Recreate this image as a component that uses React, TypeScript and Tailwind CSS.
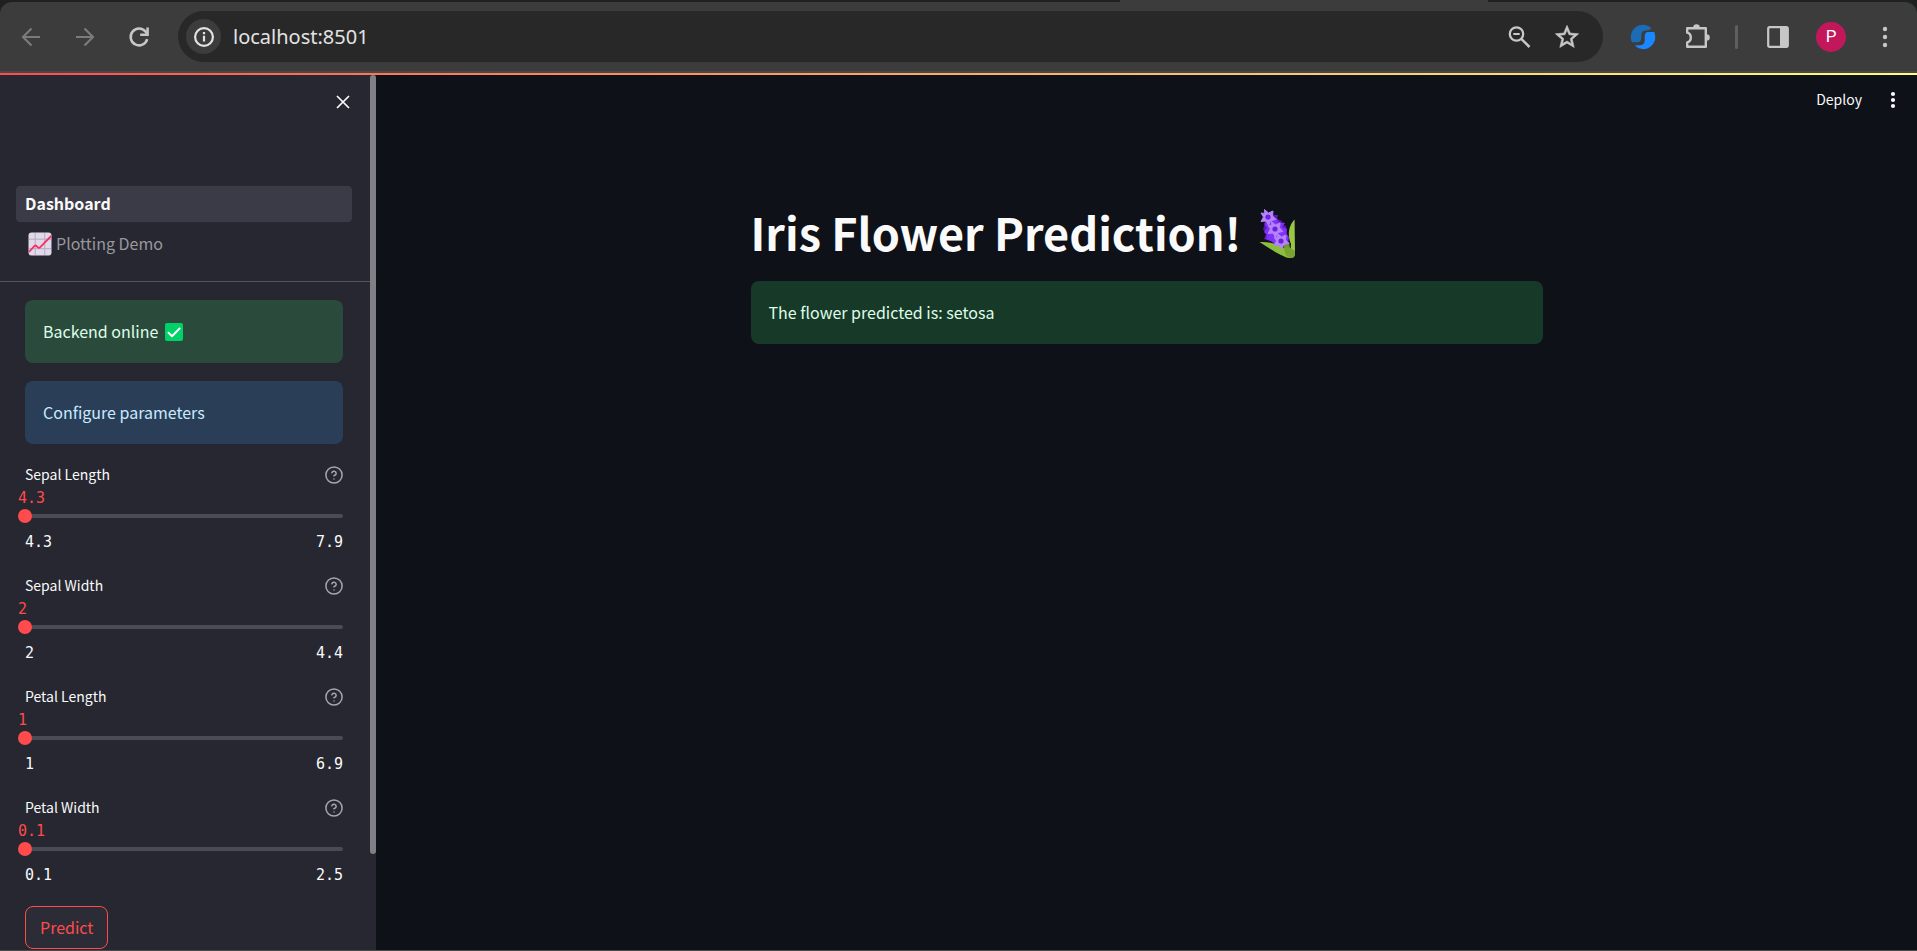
import { useState } from "react";

const sans = "font-['Noto_Sans_CJK_JP','Noto_Sans',sans-serif]";
const mono = "font-['DejaVu_Sans_Mono','Liberation_Mono',monospace]";

type Parameter = { id: string; label: string; min: number; max: number };

const parameters: Parameter[] = [
  { id: "sepal-length", label: "Sepal Length", min: 4.3, max: 7.9 },
  { id: "sepal-width", label: "Sepal Width", min: 2, max: 4.4 },
  { id: "petal-length", label: "Petal Length", min: 1, max: 6.9 },
  { id: "petal-width", label: "Petal Width", min: 0.1, max: 2.5 },
];

function BackIcon() {
  return (
    <svg width="24" height="24" viewBox="0 0 24 24" fill="none" stroke="#7b7b7b" strokeWidth="2.2">
      <path d="M21 12H4.5M12.500 3.500 4 12l8.500 8.500" />
    </svg>
  );
}

function ForwardIcon() {
  return (
    <svg width="24" height="24" viewBox="0 0 24 24" fill="none" stroke="#7b7b7b" strokeWidth="2.2">
      <path d="M3 12h16.500M11.500 3.500 20 12l-8.500 8.500" />
    </svg>
  );
}

function ReloadIcon() {
  return (
    <svg width="24" height="24" viewBox="0 0 24 24" fill="none" stroke="#c7c7c7" strokeWidth="2.500">
      <path d="M20.200 14.200A8.400 8.400 0 1 1 18.600 6.600L20.500 9" />
      <path d="M20.600 2.500V9.800H13.200" />
    </svg>
  );
}

function InfoIcon() {
  return (
    <svg width="22" height="22" viewBox="0 0 22 22" fill="none">
      <circle cx="11" cy="11" r="8.900" stroke="#e3e3e3" strokeWidth="2.200" />
      <path d="M11 9.800v5.700M11 6v2.200" stroke="#e3e3e3" strokeWidth="2.200" />
    </svg>
  );
}

function ZoomOutIcon() {
  return (
    <svg width="24" height="24" viewBox="0 0 24 24" fill="none" stroke="#c7c7c7">
      <circle cx="9.500" cy="9" r="6.700" strokeWidth="2.300" />
      <path d="M14.300 13.800 22.500 22" strokeWidth="2.500" />
      <path d="M6.300 9h6.400" strokeWidth="2" />
    </svg>
  );
}

function StarIcon() {
  return (
    <svg width="28" height="28" viewBox="0 0 24 24" fill="#c7c7c7">
      <path d="M22 9.240l-7.190-.620L12 2 9.190 8.630 2 9.240l5.460 4.730L5.820 21 12 17.270 18.180 21l-1.630-7.030L22 9.240zM12 15.400l-3.760 2.270 1-4.280-3.320-2.880 4.380-.380L12 6.100l1.710 4.040 4.380.380-3.320 2.880 1 4.280L12 15.400z" stroke="#c7c7c7" strokeWidth="0.500" />
    </svg>
  );
}

function SwirlIcon() {
  return (
    <svg width="26" height="26" viewBox="0 0 26 26">
      <path d="M2 18.300A12.200 12.200 0 0 1 21.500 4.200C19.500 6.400 17.500 6.300 15.500 6.600 12.500 7.100 11.300 8.500 11.300 11.500 11.300 14.500 11.500 18.300 7.500 18.300Z" fill="#1b6cb5" />
      <path d="M24.200 7.900A12.200 12.200 0 0 1 4.500 21.600C6.500 21.300 8 21.500 9.500 21.300 13.500 21 14.700 19.500 14.700 15.500 14.700 11 14.500 7.900 18.500 7.900Z" fill="#1a86ff" />
    </svg>
  );
}

function PuzzleIcon() {
  return (
    <svg width="26" height="26" viewBox="0 0 26 26" fill="none">
      <path
        d="M2.200 4.200H20.800V22.800H2.200V18.300C4.600 17.800 5.800 15.700 5.800 13.500 5.800 11.300 4.600 9.200 2.200 8.700Z"
        stroke="#c7c7c7"
        strokeWidth="2.400"
        strokeLinejoin="round"
      />
      <path d="M8.200 3.500a3.300 3.300 0 0 1 6.600 0ZM21.500 10.200a3.300 3.300 0 0 1 0 6.600Z" fill="#c7c7c7" />
    </svg>
  );
}

function SidePanelIcon() {
  return (
    <svg width="22" height="22" viewBox="0 0 22 22">
      <rect x="1.200" y="1.200" width="19.600" height="19.600" rx="1.500" fill="none" stroke="#c7c7c7" strokeWidth="2.200" />
      <path d="M13 1h8v20h-8z" fill="#c7c7c7" />
    </svg>
  );
}

function BrowserDotsIcon() {
  return (
    <svg width="6" height="22" viewBox="0 0 6 22" fill="#c7c7c7">
      <circle cx="3" cy="3" r="2.200" />
      <circle cx="3" cy="11" r="2.200" />
      <circle cx="3" cy="19" r="2.200" />
    </svg>
  );
}

function MenuDotsIcon() {
  return (
    <svg width="6" height="18" viewBox="0 0 6 18" fill="#fafafa">
      <circle cx="3" cy="3" r="2.100" />
      <circle cx="3" cy="9" r="2.100" />
      <circle cx="3" cy="15" r="2.100" />
    </svg>
  );
}

function CloseIcon() {
  return (
    <svg width="14" height="14" viewBox="0 0 14 14" fill="none" stroke="#fafafa" strokeWidth="1.700">
      <path d="M1 1 13 13M13 1 1 13" />
    </svg>
  );
}

function ChartEmoji() {
  return (
    <svg width="24" height="24" viewBox="0 0 24 24" className="shrink-0">
      <rect x="0.500" y="0.500" width="23" height="23" rx="3" fill="#e1d8ec" />
      <path d="M7.200 1v22M16.700 1v22M1 7.200h22M1 16.700h22" stroke="#b4acbc" strokeWidth="1" />
      <path d="M1 20 6.500 13.900Q7.500 13 8.500 14L10 15.400Q11 16.300 12 15.300L23.200 4" fill="none" stroke="#f92f60" strokeWidth="1.800" />
    </svg>
  );
}

function CheckEmoji() {
  return (
    <svg width="18" height="18" viewBox="0 0 18 18" className="shrink-0">
      <rect width="18" height="18" rx="2" fill="#00d26a" />
      <path d="M3.500 9.800 7 13.200 14.600 5.500" fill="none" stroke="#fff" strokeWidth="2" strokeLinecap="round" strokeLinejoin="round" />
    </svg>
  );
}

function Blossom({ x, y }: { x: number; y: number }) {
  return (
    <g transform={`translate(${x} ${y})`}>
      <path
        d="M-3.500-7.500 0.500-4 5-6 4.500-1.200 8 2.500 3 3.500 0.500 8-2 4-7 4.500-4.500 0-7-4-3.200-3.500Z"
        fill="#b484f8"
        stroke="#b484f8"
        strokeLinejoin="round"
      />
      <circle r="2.600" fill="#6b1fe0" />
    </g>
  );
}

function HyacinthEmoji() {
  return (
    <svg width="38" height="50" viewBox="0 0 38 50" className="shrink-0">
      <path d="M12 3 15 6 19 6 18 10 23 12 22 15 27 17 28 24 30 30 29 36 20 35 11 32 5 30 7 25 4 20 6 15 5 10Z" fill="#5b1bb5" />
      <path d="M9 11 18 9 19 13 26 14 23 18 28 20 27 25 30 28 28 33 25 37 18 37 12 32 7 30 8 26 5 23 8 19 5 15Z" fill="#8030fb" />
      <path d="M24 36 30 33 32 45 28 47Z" fill="#6c942a" />
      <path d="M35.600 10.500C29 17 28.500 28 32 35L31 49C35 49 36 47 36 44Z" fill="#97c642" />
      <path d="M0.500 33C10 32.500 22 35 29 42L33 48.500C29 50 26 48 22 46 13 42 6 36 0.500 33Z" fill="#8cbd3d" />
      <path d="M25 40 28 37 36 42V46C35 50 30 50 27 46Z" fill="#78a330" />
      <Blossom x={9} y={8} />
      <Blossom x={16} y={20} />
      <Blossom x={22} y={32} />
    </svg>
  );
}

function HelpIcon() {
  return (
    <svg width="18" height="18" viewBox="0 0 24 24" fill="none" stroke="#a6a6ab" strokeWidth="2" strokeLinecap="round" strokeLinejoin="round">
      <circle cx="12" cy="12" r="10.800" />
      <path d="M9.090 9a3 3 0 0 1 5.830 1c0 2-3 3-3 3M12 17.200h.010" />
    </svg>
  );
}

function BrowserBar() {
  return (
    <header className="shrink-0 bg-[#1f2020]">
      <div className="flex h-[2px]">
        <div className="w-[58.400%]" />
        <div className="w-[19.200%] bg-[#3c3c3c]" />
      </div>
      <div className="flex h-[71px] items-center rounded-t-[12px] border-b-2 border-[#474747] bg-[#3c3c3c] pr-[29px] pl-[19px]">
        <div className="flex gap-[30px]">
          <button aria-label="Back"><BackIcon /></button>
          <button aria-label="Forward"><ForwardIcon /></button>
          <button aria-label="Reload"><ReloadIcon /></button>
        </div>
        <div className="ml-[27px] flex h-[51px] flex-1 items-center rounded-full bg-[#282828] pr-[22px] pl-2">
          <button aria-label="Site information" className="flex size-[35px] items-center justify-center rounded-full bg-[#3c3c3c]">
            <InfoIcon />
          </button>
          <input
            aria-label="Address"
            defaultValue="localhost:8501"
            className="ml-3 min-w-0 flex-1 bg-transparent font-['Noto_Sans','Open_Sans',sans-serif] text-[20px] text-[#e3e3e3] outline-none"
          />
          <button aria-label="Zoom out" className="mr-[22px]"><ZoomOutIcon /></button>
          <button aria-label="Bookmark"><StarIcon /></button>
        </div>
        <div className="ml-[27px] flex items-center">
          <button aria-label="Extension"><SwirlIcon /></button>
          <button aria-label="Extensions" className="ml-[29px]"><PuzzleIcon /></button>
          <div className="ml-[24px] h-[24px] w-[3px] rounded-full bg-[#5f5f5f]" />
          <button aria-label="Side panel" className="ml-[29px]"><SidePanelIcon /></button>
          <button
            aria-label="Profile"
            className="ml-[27px] flex size-[30px] items-center justify-center rounded-full bg-[#c2185b] font-['Roboto',sans-serif] text-[17px] text-white"
          >
            P
          </button>
          <button aria-label="Browser menu" className="ml-[36px]"><BrowserDotsIcon /></button>
        </div>
      </div>
    </header>
  );
}

function ParameterSlider({ id, label, min, max }: Parameter) {
  const [value, setValue] = useState(min);
  const percent = ((value - min) / (max - min)) * 100;
  return (
    <div className="flex h-[93px] flex-col">
      <div className="flex h-[26px] items-center justify-between">
        <label htmlFor={id} className="text-[14px] text-[#fafafa]">{label}</label>
        <button aria-label={`Help for ${label}`}><HelpIcon /></button>
      </div>
      <output
        htmlFor={id}
        className={`-ml-[7px] h-[22px] text-[15px] leading-[22px] text-[#ff4b4b] ${mono}`}
        style={{ paddingLeft: `${percent}%` }}
      >
        {value}
      </output>
      <div className="grid h-[14px] items-center">
        <div className="col-start-1 row-start-1 h-1 rounded-sm bg-[#494b56]" />
        <input
          id={id}
          type="range"
          min={min}
          max={max}
          step={0.1}
          value={value}
          onChange={(event) => setValue(Number(event.target.value))}
          className="col-start-1 row-start-1 -mx-[7px] h-[14px] appearance-none bg-transparent [&::-webkit-slider-thumb]:size-[14px] [&::-webkit-slider-thumb]:appearance-none [&::-webkit-slider-thumb]:rounded-full [&::-webkit-slider-thumb]:bg-[#ff4b4b]"
        />
      </div>
      <div className={`mt-[6px] flex justify-between text-[15px] leading-[26px] text-[#fafafa] ${mono}`}>
        <span>{min}</span>
        <span>{max}</span>
      </div>
    </div>
  );
}

function Sidebar() {
  return (
    <aside className="flex w-[376px] shrink-0 bg-[#262730]">
      <div className="min-w-0 flex-1">
        <div className="flex h-[111px] justify-end pt-5 pr-5">
          <button aria-label="Close sidebar" className="flex h-[14px]"><CloseIcon /></button>
        </div>
        <nav className="flex flex-col gap-1 pr-[18px] pb-[19px] pl-4 text-[16px] leading-[34px]">
          <a href="#dashboard" className="block h-9 rounded bg-[#3b3b47] px-[9px] font-bold text-[#fafafa]">Dashboard</a>
          <a href="#plotting" className="flex h-9 gap-1 px-3 text-[#98989d]">
            <span className="flex items-center"><ChartEmoji /></span>
            <span>Plotting Demo</span>
          </a>
        </nav>
        <div className="flex flex-col gap-[18px] border-t border-[#53545c] pt-[18px] pr-[27px] pl-[25px]">
          <div className="flex h-[63px] items-center gap-[7px] rounded-lg bg-[#2a4b3b] px-[18px] text-[16px] text-[#dffde9]">
            <span className="pb-[2px]">Backend online</span>
            <CheckEmoji />
          </div>
          <div className="flex h-[63px] items-center rounded-lg bg-[#2a3e58] px-[18px] pb-[2px] text-[16px] text-[#c7ebff]">
            Configure parameters
          </div>
          {parameters.map((parameter) => (
            <ParameterSlider key={parameter.id} {...parameter} />
          ))}
          <button className="h-[43px] self-start rounded-lg border border-[#ff4b4b] bg-[#2b2c36] px-[14px] pb-[2px] text-[16px] text-[#ff4b4b]">
            Predict
          </button>
        </div>
      </div>
      <div className="h-[89%] w-[6px] rounded-full bg-[#807f84]" />
    </aside>
  );
}

export default function App() {
  return (
    <div className={`flex h-screen flex-col overflow-hidden border-b border-[#4a4a4a] bg-[#0e1117] ${sans}`}>
      <BrowserBar />
      <div className="h-[2px] shrink-0 bg-linear-to-r from-[#ff4b4b] to-[#fffd80]" />
      <div className="flex min-h-0 flex-1">
        <Sidebar />
        <main className="min-w-0 flex-1">
          <div className="flex h-[50px] items-center justify-end gap-[28px] pr-[21px]">
            <button className="pb-[2px] text-[14px] text-[#fafafa]">Deploy</button>
            <button aria-label="Main menu"><MenuDotsIcon /></button>
          </div>
          <section className="mx-auto mt-[76px] w-full max-w-[792px]">
            <h1 className="flex h-[66px] items-center gap-[18px] text-[45px] font-bold text-[#fafafa]">
              <span className="pb-1">Iris Flower Prediction!</span>
              <HyacinthEmoji />
            </h1>
            <div className="mt-[14px] flex h-[63px] items-center rounded-lg bg-[#173928] px-[18px] pb-[2px] text-[16px] text-[#dffde9]">
              The flower predicted is: setosa
            </div>
          </section>
        </main>
      </div>
    </div>
  );
}
